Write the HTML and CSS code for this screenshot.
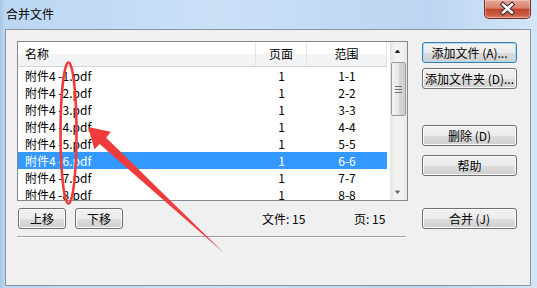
FILE: index.html
```html
<!DOCTYPE html>
<html lang="zh-CN">
<head>
    <meta charset="UTF-8">
    <title>合并文件</title>
    <link rel="stylesheet" href="styles.css">
</head>
<body>
<div class="window">
    <div class="titlebar">
        <span class="title">合并文件</span>
        <div class="close">
            <svg width="47" height="19" viewBox="0 0 47 19">
                <path d="M19 5.5 L28 13.5 M28 5.5 L19 13.5" stroke="#3b2a2a" stroke-width="4.5" stroke-linecap="square"/>
                <path d="M19 5.5 L28 13.5 M28 5.5 L19 13.5" stroke="#ffffff" stroke-width="2.6" stroke-linecap="square"/>
            </svg>
        </div>
    </div>

    <div class="client">
        <div class="main">
            <div class="listbox">
                <div class="list">
                    <div class="row head">
                        <span class="c-name">名称</span>
                        <span class="c-pages">页面</span>
                        <span class="c-range">范围</span>
                    </div>
                    <div class="row"><span class="c-name">附件4 -1.pdf</span><span class="c-pages">1</span><span class="c-range">1-1</span></div>
                    <div class="row"><span class="c-name">附件4 -2.pdf</span><span class="c-pages">1</span><span class="c-range">2-2</span></div>
                    <div class="row"><span class="c-name">附件4 -3.pdf</span><span class="c-pages">1</span><span class="c-range">3-3</span></div>
                    <div class="row"><span class="c-name">附件4 -4.pdf</span><span class="c-pages">1</span><span class="c-range">4-4</span></div>
                    <div class="row"><span class="c-name">附件4 -5.pdf</span><span class="c-pages">1</span><span class="c-range">5-5</span></div>
                    <div class="row selected"><span class="c-name">附件4 -6.pdf</span><span class="c-pages">1</span><span class="c-range">6-6</span></div>
                    <div class="row"><span class="c-name">附件4 -7.pdf</span><span class="c-pages">1</span><span class="c-range">7-7</span></div>
                    <div class="row"><span class="c-name">附件4 -8.pdf</span><span class="c-pages">1</span><span class="c-range">8-8</span></div>
                </div>
                <div class="vscroll">
                    <div class="arrow">
                        <svg width="17" height="17" viewBox="0 0 17 17"><path d="M5.5 10.5 L9.5 10.5 L7.5 8 Z" fill="#1f1f1f" stroke="#1f1f1f" stroke-width="1"/></svg>
                    </div>
                    <div class="thumb">
                        <span class="grip"></span>
                        <span class="grip"></span>
                        <span class="grip"></span>
                    </div>
                    <div class="track"></div>
                    <div class="arrow">
                        <svg width="17" height="17" viewBox="0 0 17 17"><path d="M5.5 8 L9.5 8 L7.5 10.5 Z" fill="#6a6a6a" stroke="#6a6a6a" stroke-width="1"/></svg>
                    </div>
                </div>
            </div>

            <div class="status">
                <button class="btn move first">上移</button>
                <button class="btn move">下移</button>
                <span class="count files">文件: 15</span>
                <span class="count">页: 15</span>
            </div>
            <div class="sep"></div>
        </div>

        <div class="side">
            <button class="btn focused">添加文件 (A)...</button>
            <button class="btn add-folder">添加文件夹 (D)...</button>
            <button class="btn delete">删除 (D)</button>
            <button class="btn help">帮助</button>
            <button class="btn merge">合并 (J)</button>
        </div>
    </div>

    <!-- red markup drawn over the dialog -->
    <svg class="marks" width="537" height="288" viewBox="0 0 537 288">
        <ellipse cx="68.5" cy="133" rx="8" ry="70.5" fill="none" stroke="#ef3b3b" stroke-width="2.6"/>
        <polygon points="88,127 94.5,149.4 99.6,144 224,253 106.2,137.8 110.9,131.8" fill="#ef3b3b"/>
    </svg>
</div>
</body>
</html>
```

FILE: styles.css
```css
body {
    margin: 0;
    width: 537px;
    height: 288px;
    overflow: hidden;
    font-family: "Noto Sans CJK SC", "Liberation Sans", sans-serif;
    font-size: 12px;
    color: #000;
}

.window {
    position: relative;
    width: 537px;
    height: 288px;
    background: linear-gradient(90deg, #a7c6e6 0, #bcd7f2 5px, #c9e0f7 40%, #bcd6f1 80%, #d3e6f8 100%);
}

.titlebar {
    display: flex;
    align-items: flex-start;
    height: 29px;
}

.title {
    margin: 6px 0 0 6px;
    line-height: 16px;
}

.close {
    margin-left: auto;
    margin-right: 6px;
    width: 47px;
    height: 19px;
    box-sizing: border-box;
    border: 1px solid #6e2f25;
    border-top: none;
    border-radius: 0 0 5px 5px;
    background: linear-gradient(#e8a899 0, #d9806c 45%, #c4432d 52%, #c95a41 80%, #d8836b 100%);
    box-shadow: inset 0 0 0 1px rgba(255, 220, 210, 0.45);
}

.close svg {
    display: block;
    margin: -1px 0 0 -1px;
}

.client {
    display: flex;
    gap: 14px;
    margin-left: 5px;
    width: 526px;
    height: 257px;
    box-sizing: border-box;
    padding: 11px 0 0 11px;
    border: 1px solid #8a949f;
    background: #f0f0f0;
}

.main {
    width: 391px;
}

.listbox {
    display: flex;
    height: 160px;
    box-sizing: border-box;
    border: 1px solid #828790;
    background: #fff;
}

.list {
    flex: 1;
    overflow: hidden;
}

.row {
    display: flex;
    width: 369px;
    height: 17px;
    line-height: 17px;
    white-space: nowrap;
}

.row.head {
    height: 25px;
    line-height: 24px;
    box-sizing: border-box;
    border-bottom: 1px solid #d5d5d5;
    background: linear-gradient(#ffffff, #ffffff 50%, #f4f5f7 51%, #f1f2f4);
}

.row.head span {
    box-sizing: border-box;
    border-right: 1px solid #e3e4e6;
}

.row.selected {
    background: #3399ff;
    color: #fff;
}

.c-name {
    width: 238px;
    padding-left: 7px;
    box-sizing: border-box;
}

.c-pages {
    width: 51px;
    text-align: center;
}

.c-range {
    width: 80px;
    text-align: center;
}

.vscroll {
    display: flex;
    flex-direction: column;
    width: 17px;
    background: linear-gradient(90deg, #e3e3e3, #f2f2f2 30%, #f2f2f2 70%, #e8e8e8);
}

.arrow {
    height: 17px;
}

.arrow svg {
    display: block;
}

.thumb {
    display: flex;
    flex-direction: column;
    align-items: center;
    justify-content: center;
    gap: 2px;
    height: 54px;
    margin: 3px 1px 0 1px;
    box-sizing: border-box;
    border: 1px solid #9a9a9a;
    border-radius: 2px;
    background: linear-gradient(90deg, #f3f3f3, #e8e8e8 50%, #d6d6d6 51%, #cfcfcf);
}

.grip {
    width: 7px;
    height: 1px;
    background: #6f6f6f;
}

.track {
    flex: 1;
}

.status {
    display: flex;
    align-items: center;
    height: 21px;
    margin-top: 7px;
}

.count {
    line-height: 21px;
}

.files {
    width: 92px;
    margin-left: 139px;
}

.sep {
    width: 389px;
    margin-top: 7px;
    border-top: 1px solid #a0a0a0;
    border-bottom: 1px solid #ffffff;
}

.btn {
    display: block;
    height: 21px;
    box-sizing: border-box;
    padding: 0;
    border: 1px solid #707070;
    border-radius: 3px;
    background: linear-gradient(#f2f2f2, #ebebeb 50%, #dddddd 51%, #cfcfcf);
    box-shadow: inset 0 0 0 1px #fbfbfb;
    font-family: inherit;
    font-size: 12px;
    line-height: 19px;
    color: #000;
    text-align: center;
    white-space: nowrap;
}

.move {
    width: 48px;
    margin-left: 9px;
}

.move.first {
    margin-left: 1px;
}

.side {
    display: flex;
    flex-direction: column;
    width: 95px;
    padding-top: 1px;
}

.side .btn {
    width: 95px;
}

.btn.focused {
    border-color: #3c7fb1;
    box-shadow: inset 0 0 0 1px #a8dcf5;
}

.add-folder {
    margin-top: 5px;
}

.delete {
    margin-top: 36px;
}

.help {
    margin-top: 9px;
}

.merge {
    margin-top: 32px;
}

.marks {
    position: absolute;
    left: 0;
    top: 0;
    pointer-events: none;
}
```
